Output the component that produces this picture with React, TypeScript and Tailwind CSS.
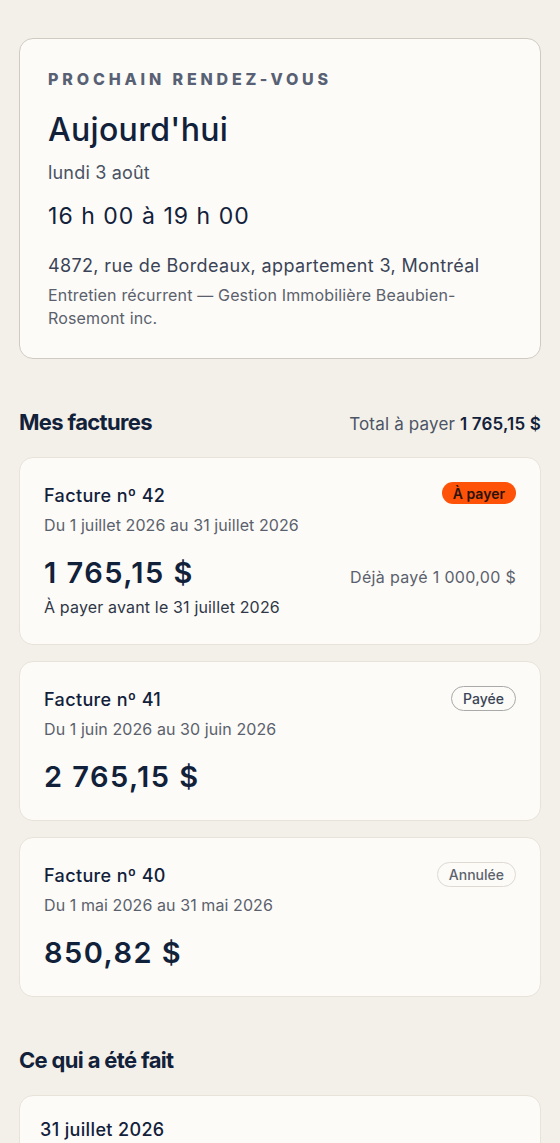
import React from 'react'

const font = { fontFamily: 'Inter, "Noto Sans", sans-serif' }

type Invoice = {
  num: number
  period: string
  amount: string
  status: 'due' | 'paid' | 'cancelled'
  paid?: string
  dueDate?: string
}

const invoices: Invoice[] = [
  {
    num: 42,
    period: 'Du 1 juillet 2026 au 31 juillet 2026',
    amount: '1 765,15 $',
    status: 'due',
    paid: 'Déjà payé 1 000,00 $',
    dueDate: 'À payer avant le 31 juillet 2026',
  },
  { num: 41, period: 'Du 1 juin 2026 au 30 juin 2026', amount: '2 765,15 $', status: 'paid' },
  { num: 40, period: 'Du 1 mai 2026 au 31 mai 2026', amount: '850,82 $', status: 'cancelled' },
]

function Badge({ status }: { status: Invoice['status'] }) {
  if (status === 'due') {
    return (
      <span className="inline-flex h-[22px] items-center rounded-full bg-[#fd5208] px-[11px] text-[14px] font-semibold text-[#2b1208]">
        À payer
      </span>
    )
  }
  if (status === 'paid') {
    return (
      <span className="inline-flex h-[25px] items-center rounded-full border border-[#a9a9a9] px-[11px] text-[14px] font-medium text-[#3b4455]">
        Payée
      </span>
    )
  }
  return (
    <span className="inline-flex h-[25px] items-center rounded-full border border-[#dedad2] px-[11px] text-[14px] font-medium text-[#5d636d]">
      Annulée
    </span>
  )
}

function InvoiceCard({ inv }: { inv: Invoice }) {
  return (
    <div className="rounded-[14px] border border-[#e8e3d9] bg-[#fcfbf8] px-6 pt-6 pb-[25px]">
      <div className="flex items-start justify-between">
        <div className="text-[18px] leading-7 font-medium tracking-[0.02em] text-[#12213a]">Facture nº {inv.num}</div>
        <Badge status={inv.status} />
      </div>
      <div className="mt-[3px] text-[16px] leading-6 tracking-[0.005em] text-[#5b616c]">{inv.period}</div>
      <div className="mt-[18px] flex items-baseline justify-between">
        <div className="text-[29px] leading-9 font-semibold tracking-[0.05em] text-[#12213a]">{inv.amount}</div>
        {inv.paid && <div className="text-[16px] leading-6 tracking-[0.02em] text-[#5b616c]">{inv.paid}</div>}
      </div>
      {inv.dueDate && <div className="mt-1 text-[16px] leading-6 tracking-[0.01em] text-[#2f3747]">{inv.dueDate}</div>}
    </div>
  )
}

export default function App() {
  return (
    <div style={font} className="min-h-screen bg-[#f3f0e9] px-[19px] pt-[38px] pb-10">
      <div className="rounded-[14px] border border-[#cfcbc2] bg-[#fcfbf8] px-7 pt-[30px] pb-7">
        <div className="text-[16px] leading-5 font-extrabold tracking-[0.24em] text-[#586173]">PROCHAIN RENDEZ-VOUS</div>
        <div className="mt-[21px] text-[32px] leading-10 font-medium tracking-[0.01em] text-[#12213a]">Aujourd'hui</div>
        <div className="mt-[9px] text-[18px] leading-7 tracking-[0.01em] text-[#4a5263]">lundi 3 août</div>
        <div className="mt-[13px] text-[23px] leading-8 tracking-[0.045em] text-[#12213a]">16 h 00 à 19 h 00</div>
        <div className="mt-5 text-[18px] leading-7 tracking-[0.02em] text-[#3b4456]">4872, rue de Bordeaux, appartement 3, Montréal</div>
        <div className="mt-1 max-w-[410px] text-[16px] leading-[23px] tracking-[0.01em] text-[#5b616c]">
          Entretien récurrent — Gestion Immobilière Beaubien-Rosemont inc.
        </div>
      </div>

      <div className="mt-[49px] flex h-7 items-baseline justify-between">
        <h2 className="text-[22px] leading-7 font-bold tracking-[-0.03em] text-[#12213a]">Mes factures</h2>
        <div className="text-[17px] leading-[22px] tracking-[0.01em] text-[#4c5465]">
          Total à payer <span className="font-semibold text-[#12213a]">1 765,15 $</span>
        </div>
      </div>

      <div className="mt-[21px] flex flex-col gap-4">
        {invoices.map((inv) => (
          <InvoiceCard key={inv.num} inv={inv} />
        ))}
      </div>

      <h2 className="mt-[49px] text-[22px] leading-7 font-bold tracking-[-0.03em] text-[#12213a]">Ce qui a été fait</h2>

      <div className="mt-[21px] rounded-[14px] border border-[#e8e3d9] bg-[#fcfbf8] p-5">
        <div className="text-[18px] leading-7 font-medium tracking-[0.02em] text-[#12213a]">31 juillet 2026</div>
        <div className="mt-2 text-[16px] leading-6 text-[#5b616c]">Entretien récurrent</div>
      </div>
    </div>
  )
}
